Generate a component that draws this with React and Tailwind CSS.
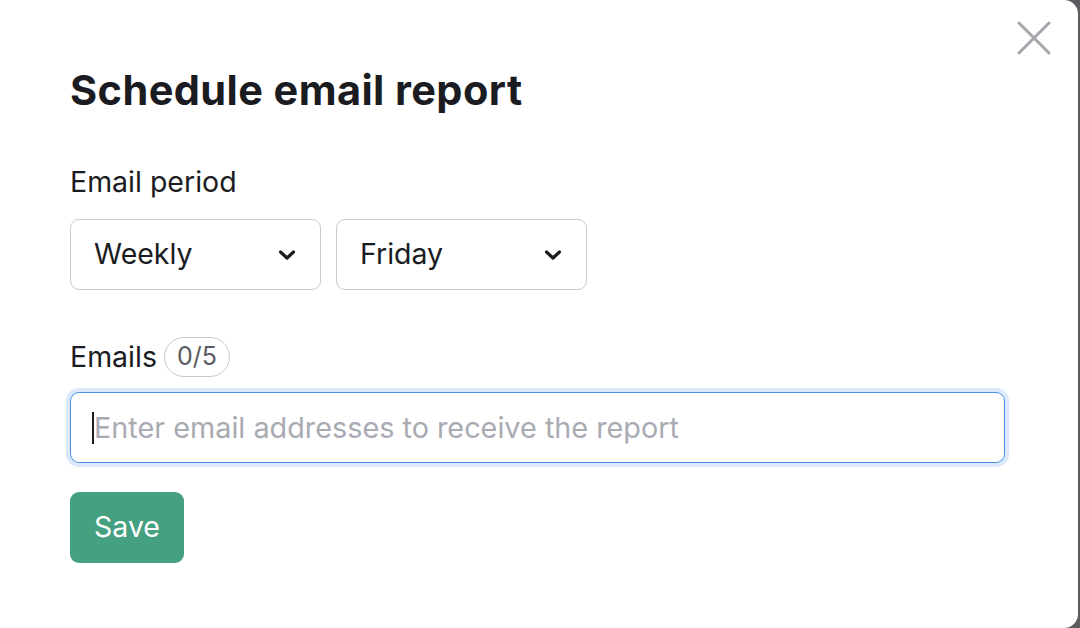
export default function App() {
  return (
    <div className="w-[1080px] h-[628px] bg-[#5b5b60] flex overflow-hidden" style={{ fontFamily: "Inter, 'Noto Sans', sans-serif" }}>
      <div className="relative w-[1078px] h-full bg-white rounded-tr-[14px] rounded-br-[14px] pl-[70px] pt-[67px]">
        <button className="absolute top-[21px] right-[27px] w-[34px] h-[34px] text-[#a3a5ab]">
          <svg viewBox="0 0 34 34" width="34" height="34" fill="none" stroke="currentColor" strokeWidth="3" strokeLinecap="round">
            <path d="M2 2 L32 32 M32 2 L2 32" />
          </svg>
        </button>

        <h1 className="text-[41.5px] leading-[46px] font-bold text-[#1b1c22] tracking-[0.4px]">Schedule email report</h1>

        <p className="mt-[52px] text-[28.5px] leading-[34px] text-[#1b1c22]">Email period</p>

        <div className="mt-[20px] flex gap-[15px]">
          {["Weekly", "Friday"].map((v) => (
            <div
              key={v}
              className="w-[251px] h-[71px] border border-[#c9cacf] rounded-[9px] flex items-center justify-between pl-[23px] pr-[24px] text-[28.5px] text-[#1b1c22]"
            >
              <span>{v}</span>
              <svg width="18" height="12" viewBox="0 0 18 12" fill="none" stroke="#1b1c22" strokeWidth="3.2" strokeLinecap="round" strokeLinejoin="round">
                <path d="M2.5 3 L9 9 L15.5 3" />
              </svg>
            </div>
          ))}
        </div>

        <div className="mt-[47px] flex items-center gap-[7px] h-[40px]">
          <span className="text-[28.5px] text-[#1b1c22]">Emails</span>
          <span className="h-[40px] px-[12px] rounded-full border border-[#c9cacf] text-[25px] text-[#5b5c63] flex items-center">0/5</span>
        </div>

        <div className="mt-[15px] w-[935px] h-[71px] rounded-[9px] border border-[#4a90e2] ring-4 ring-[#dce9fb] flex items-center pl-[21px] text-[28.8px]">
          <span className="w-[2px] h-[32px] bg-[#1b1c22]" />
          <span className="text-[#a9abb3]">Enter email addresses to receive the report</span>
        </div>

        <button className="mt-[29px] w-[114px] h-[71px] rounded-[9px] bg-[#45a081] text-white text-[28.5px]">Save</button>
      </div>
    </div>
  );
}
